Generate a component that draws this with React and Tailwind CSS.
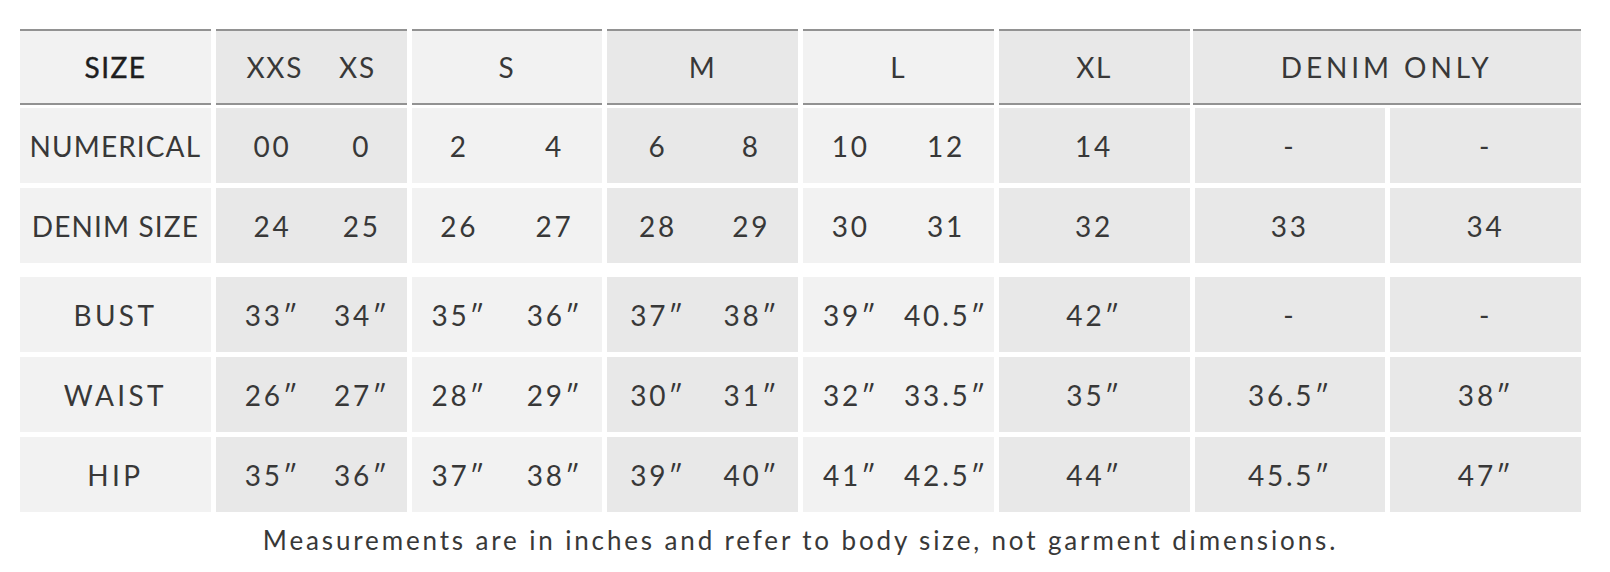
const light = "bg-[#f2f2f2]";
const dark = "bg-[#e8e8e8]";

const sizes = [
  { bg: dark, pad: "pl-[12px]", num: ["00", "0"], denim: ["24", "25"], bust: ["33″", "34″"], waist: ["26″", "27″"], hip: ["35″", "36″"] },
  { bg: light, pad: "", num: ["2", "4"], denim: ["26", "27"], bust: ["35″", "36″"], waist: ["28″", "29″"], hip: ["37″", "38″"] },
  { bg: dark, pad: "pl-[4px]", num: ["6", "8"], denim: ["28", "29"], bust: ["37″", "38″"], waist: ["30″", "31″"], hip: ["39″", "40″"] },
  { bg: light, pad: "", num: ["10", "12"], denim: ["30", "31"], bust: ["39″", "40.5″"], waist: ["32″", "33.5″"], hip: ["41″", "42.5″"] },
];

const rows = [
  { key: "num", label: "NUMERICAL", xl: "14", extra: ["-", "-"], track: "tracking-[0.04em]" },
  { key: "denim", label: "DENIM SIZE", xl: "32", extra: ["33", "34"], track: "tracking-[0.04em]" },
  { key: "bust", label: "BUST", xl: "42″", extra: ["-", "-"], track: "tracking-[0.12em]", gap: true },
  { key: "waist", label: "WAIST", xl: "35″", extra: ["36.5″", "38″"], track: "tracking-[0.12em]" },
  { key: "hip", label: "HIP", xl: "44″", extra: ["45.5″", "47″"], track: "tracking-[0.12em]" },
];

function Pair({ bg, pad, values }) {
  return (
    <div className={`grid grid-cols-2 items-center text-center tracking-[0.1em] ${bg} ${pad}`}>
      <span>{values[0]}</span>
      <span>{values[1]}</span>
    </div>
  );
}

export default function App() {
  const head = "flex items-center justify-center border-y-2 border-[#929292]";
  const cell = `flex items-center justify-center tracking-[0.1em] ${dark}`;
  return (
    <div className="min-h-screen bg-white pt-[29px] pl-[20px] font-['Lato','Liberation_Sans',sans-serif] text-[#383838]">
      <div className="w-[1561px] text-[28px] tracking-[0.06em]">
        {/* header */}
        <div className="grid h-[76px] grid-cols-8 gap-x-[5px]">
          <div className={`${head} ${light} tracking-[0.05em] text-[#1e1e1e] [-webkit-text-stroke:0.4px_#1e1e1e]`}>SIZE</div>
          <div className={`${head} ${dark} gap-[36px]`}>
            <span>XXS</span>
            <span>XS</span>
          </div>
          <div className={`${head} ${light}`}>S</div>
          <div className={`${head} ${dark}`}>M</div>
          <div className={`${head} ${light}`}>L</div>
          <div className={`${head} ${dark}`}>XL</div>
          <div className={`${head} ${dark} col-span-2 -ml-[2px] tracking-[0.14em]`}>DENIM ONLY</div>
        </div>

        {rows.map((r, i) => (
          <div
            key={r.key}
            className={`grid h-[75px] grid-cols-8 gap-x-[5px] ${
              i === 0 ? "mt-[3px]" : r.gap ? "mt-[14px]" : "mt-[5px]"
            }`}
          >
            <div className={`flex items-center justify-center ${light} ${r.track}`}>{r.label}</div>
            {sizes.map((s, j) => (
              <Pair key={j} bg={s.bg} pad={s.pad} values={s[r.key]} />
            ))}
            <div className={cell}>{r.xl}</div>
            <div className={cell}>{r.extra[0]}</div>
            <div className={cell}>{r.extra[1]}</div>
          </div>
        ))}

        <p className="mt-[9px] text-center text-[26px] tracking-[0.11em]">
          Measurements are in inches and refer to body size, not garment dimensions.
        </p>
      </div>
    </div>
  );
}
